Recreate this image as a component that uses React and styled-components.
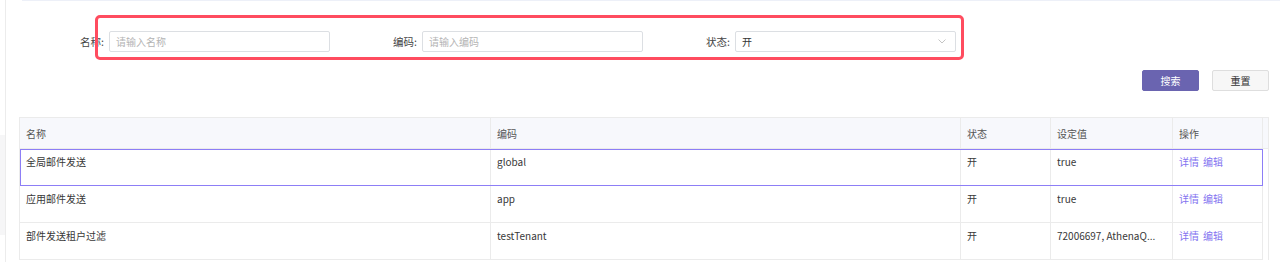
import React from "react";
import styled, { createGlobalStyle } from "styled-components";

const GlobalStyle = createGlobalStyle`
  html, body { margin: 0; padding: 0; background: #fff; }
  body {
    font-family: "Noto Sans CJK SC", "Microsoft YaHei", "Noto Sans", sans-serif;
    font-size: 10px;
    color: #333;
  }
  * { box-sizing: border-box; }
`;

const Page = styled.div`
  display: flex;
  width: 1280px;
  height: 262px;
  overflow: hidden;
`;

const SideEdge = styled.div`
  width: 6px;
  flex: none;
  border-right: 1px solid #ececec;
  display: flex;
  flex-direction: column;
  padding-top: 135px;
`;

const SideBlock = styled.div`
  height: 100px;
  background: #f6f6f7;
`;

const Main = styled.main`
  flex: 1;
  display: flex;
  flex-direction: column;
`;

const TopRule = styled.div`
  height: 1px;
  margin-left: 16px;
  background: #edf0f8;
`;

const FormRow = styled.div`
  position: relative;
  display: flex;
  padding: 30px 0 0 11px;
`;

const FormItem = styled.div`
  display: flex;
  align-items: center;
  width: 313px;
`;

const Label = styled.label`
  width: 92px;
  padding-right: 5px;
  text-align: right;
  color: #444;
  font-size: 10.5px;
  line-height: 21px;
  white-space: nowrap;
`;

const Field = styled.div`
  position: relative;
  width: 221px;
  height: 21px;
  border: 1px solid #dcdfe3;
  border-radius: 2px;
  display: flex;
  align-items: center;
  padding: 0 6px;
  color: ${(p) => (p.$placeholder ? "#b4b4b4" : "#333")};
  font-size: 10px;
`;

const Chevron = styled.svg`
  position: absolute;
  right: 9px;
  top: 7px;
`;

const Highlight = styled.div`
  position: absolute;
  left: 89px;
  top: 14px;
  width: 869px;
  height: 45px;
  border: 3px solid #ff4c5f;
  border-radius: 5px;
  pointer-events: none;
`;

const ButtonRow = styled.div`
  display: flex;
  justify-content: flex-end;
  gap: 13px;
  margin-top: 18px;
  padding-right: 11px;
`;

const Button = styled.button`
  width: 57px;
  height: 21px;
  padding: 0;
  border-radius: 2px;
  font-family: inherit;
  font-size: 10px;
  line-height: 19px;
  cursor: pointer;
  border: 1px solid ${(p) => (p.$primary ? "#6a64b0" : "#dedede")};
  background: ${(p) => (p.$primary ? "#6a64b0" : "#f7f7f7")};
  color: ${(p) => (p.$primary ? "#fff" : "#333")};
`;

const TableWrap = styled.div`
  margin: 26px 0 0 13px;
  width: 1250px;
  border: 1px solid #ebebeb;
  border-bottom: none;
`;

const COLS = "471px 470px 90px 122px 90px";

const HeadRow = styled.div`
  display: grid;
  grid-template-columns: ${COLS} 1fr;
  height: 31px;
  background: #f7f8fc;
  border-bottom: 1px solid #ebebeb;
`;

const HeadCell = styled.div`
  padding: 0 6px;
  display: flex;
  align-items: center;
  color: #555;
  border-right: ${(p) => (p.$gutter ? "none" : "1px solid #ebebeb")};
`;

const BodyRow = styled.div`
  display: grid;
  grid-template-columns: ${COLS};
  width: 1243px;
  height: 37px;
  border-bottom: 1px solid #ebebeb;
  outline: ${(p) => (p.$selected ? "1px solid #8d7ef6" : "none")};
  outline-offset: -1px;
`;

const Cell = styled.div`
  padding: 3px 6px 0;
  line-height: 20px;
  color: #383838;
  border-right: 1px solid #ebebeb;
  white-space: nowrap;
  overflow: hidden;
`;

const LinkGroup = styled.div`
  display: flex;
  gap: 4px;
`;

const Link = styled.a`
  color: #8474f0;
  cursor: pointer;
`;

const rows = [
  { name: "全局邮件发送", code: "global", status: "开", value: "true", selected: true },
  { name: "应用邮件发送", code: "app", status: "开", value: "true" },
  { name: "部件发送租户过滤", code: "testTenant", status: "开", value: "72006697, AthenaQ..." },
];

export default function App() {
  return (
    <>
      <GlobalStyle />
      <Page>
        <SideEdge>
          <SideBlock />
        </SideEdge>
        <Main>
          <TopRule />
          <FormRow>
            <FormItem>
              <Label>名称:</Label>
              <Field $placeholder>请输入名称</Field>
            </FormItem>
            <FormItem>
              <Label>编码:</Label>
              <Field $placeholder>请输入编码</Field>
            </FormItem>
            <FormItem>
              <Label>状态:</Label>
              <Field>
                开
                <Chevron width="8" height="5" viewBox="0 0 8 5">
                  <polyline points="0.5,0.5 4,4 7.5,0.5" fill="none" stroke="#c4c4c4" strokeWidth="1" />
                </Chevron>
              </Field>
            </FormItem>
            <Highlight />
          </FormRow>
          <ButtonRow>
            <Button $primary>搜索</Button>
            <Button>重置</Button>
          </ButtonRow>
          <TableWrap>
            <HeadRow>
              <HeadCell>名称</HeadCell>
              <HeadCell>编码</HeadCell>
              <HeadCell>状态</HeadCell>
              <HeadCell>设定值</HeadCell>
              <HeadCell>操作</HeadCell>
              <HeadCell $gutter />
            </HeadRow>
            {rows.map((r) => (
              <BodyRow key={r.code} $selected={r.selected}>
                <Cell>{r.name}</Cell>
                <Cell>{r.code}</Cell>
                <Cell>{r.status}</Cell>
                <Cell>{r.value}</Cell>
                <Cell>
                  <LinkGroup>
                    <Link>详情</Link>
                    <Link>编辑</Link>
                  </LinkGroup>
                </Cell>
              </BodyRow>
            ))}
          </TableWrap>
        </Main>
      </Page>
    </>
  );
}
